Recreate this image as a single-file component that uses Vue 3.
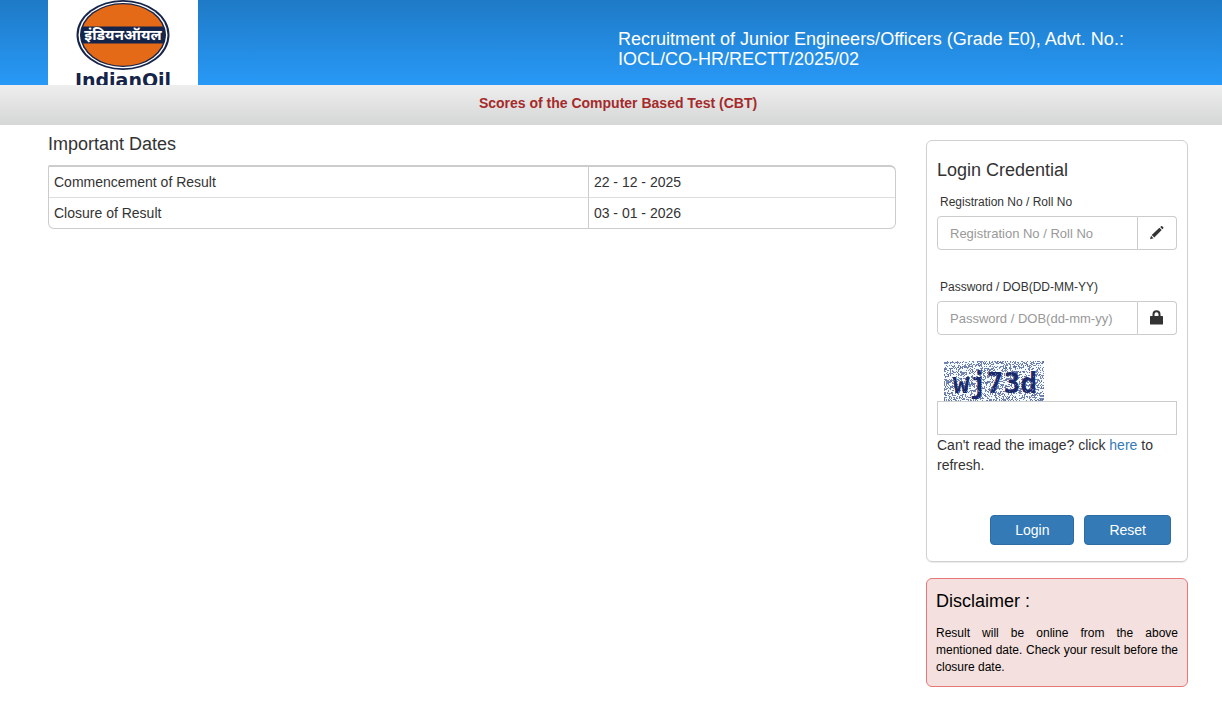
<script setup>
import { ref, computed } from 'vue'

const advtTitle = ref('Recruitment of Junior Engineers/Officers (Grade E0), Advt. No.: IOCL/CO-HR/RECTT/2025/02')

const importantDates = ref([
  { id: 1, label: 'Commencement of Result', date: '22 - 12 - 2025' },
  { id: 2, label: 'Closure of Result', date: '03 - 01 - 2026' },
])

const regNo = ref('')
const password = ref('')
const captchaInput = ref('')
const captchaText = ref('wj73d')
const captchaSeed = ref(7)

// speckles around the captcha text, one subpath per pixel
function speckles(seed, density) {
  let s = seed
  let d = ''
  for (let y = 0; y < 40; y++) {
    for (let x = 0; x < 100; x++) {
      s = (s * 16807) % 2147483647
      const wave = Math.sin((y * 3 + x * 0.4) / 3) * 0.08
      if (s / 2147483647 < density + wave) d += `M${x} ${y}h1v1h-1z`
    }
  }
  return d
}

const backNoise = computed(() => speckles(captchaSeed.value * 7919, 0.38))
const overNoise = computed(() => speckles(captchaSeed.value * 104729, 0.06))

function randomCaptcha() {
  const chars = 'abcdefghjkmnpqrstuvwxyz23456789'
  let out = ''
  for (let i = 0; i < 5; i++) out += chars[Math.floor(Math.random() * chars.length)]
  return out
}

function refreshCaptcha() {
  captchaSeed.value++
  captchaText.value = randomCaptcha()
  captchaInput.value = ''
}

function resetForm() {
  regNo.value = ''
  password.value = ''
  captchaInput.value = ''
}

function login() {
  if (!regNo.value || !password.value) return
  if (captchaInput.value !== captchaText.value) refreshCaptcha()
}
</script>

<template>
  <div class="page">
    <header class="page-header">
      <svg class="logo" width="150" height="85" viewBox="0 0 150 85" role="img">
        <rect width="150" height="85" fill="#fff" />
        <ellipse cx="75" cy="35" rx="46.5" ry="35" fill="#16244a" />
        <ellipse cx="75" cy="35" rx="44.5" ry="33.3" fill="#fff" />
        <ellipse cx="75" cy="35" rx="43" ry="32" fill="#16244a" />
        <ellipse cx="75" cy="35" rx="41.5" ry="30.8" fill="#e56a17" />
        <path d="M34 26.5h82q2.800 8.500 0 17h-82q-2.800-8.500 0-17z" fill="#16244a" />
        <text class="logo-hindi" x="75" y="40" text-anchor="middle">इंडियनऑयल</text>
        <text class="logo-name" x="75" y="87" text-anchor="middle">IndianOil</text>
      </svg>
      <h1 class="advt-title">{{ advtTitle }}</h1>
    </header>

    <div class="sub-header">
      <h2>Scores of the Computer Based Test (CBT)</h2>
    </div>

    <main class="content">
      <section class="dates">
        <h3 class="section-title">Important Dates</h3>
        <table class="dates-table">
          <colgroup>
            <col class="col-label" />
            <col />
          </colgroup>
          <tbody>
            <tr v-for="row in importantDates" :key="row.id">
              <td>{{ row.label }}</td>
              <td>{{ row.date }}</td>
            </tr>
          </tbody>
        </table>
      </section>

      <aside class="sidebar">
        <form class="card login-card" @submit.prevent="login" @reset.prevent="resetForm">
          <h3 class="section-title">Login Credential</h3>

          <label class="field-label" for="reg-no">Registration No / Roll No</label>
          <div class="input-group">
            <input id="reg-no" v-model="regNo" type="text" placeholder="Registration No / Roll No" />
            <span class="addon">
              <svg width="16" height="16" viewBox="0 0 16 16" fill="#333">
                <path d="M1 14.200l1-3.400 2.500 2.500z" />
                <path d="M2.700 10l7.700-7.200 2.300 2.300-7.400 7.500z" />
                <path d="M11.200 2.100l1-.9q.5-.4 1 0l1.100 1.100q.4.500 0 1l-.9 1z" />
              </svg>
            </span>
          </div>

          <label class="field-label" for="password">Password / DOB(DD-MM-YY)</label>
          <div class="input-group">
            <input id="password" v-model="password" type="password" placeholder="Password / DOB(dd-mm-yy)" />
            <span class="addon">
              <svg width="16" height="16" viewBox="0 0 16 16">
                <path d="M4.500 8V4.200q0-2.900 3-2.900t3 2.900V8" fill="none" stroke="#333" stroke-width="2" />
                <rect x="1" y="6" width="13" height="8.500" rx=".6" fill="#333" />
              </svg>
            </span>
          </div>

          <svg class="captcha" width="100" height="40" viewBox="0 0 100 40" role="img">
            <rect width="100" height="40" fill="#f4fbff" />
            <path :d="backNoise" fill="#7584ae" />
            <text x="51" y="32" text-anchor="middle">{{ captchaText }}</text>
            <path :d="overNoise" fill="#5a69a3" />
          </svg>
          <input v-model="captchaInput" class="captcha-input" type="text" aria-label="Captcha" />
          <p class="captcha-help">Can't read the image? click <a href="#" @click.prevent="refreshCaptcha">here</a> to refresh.</p>

          <div class="actions">
            <button type="submit" class="btn">Login</button>
            <button type="reset" class="btn">Reset</button>
          </div>
        </form>

        <section class="card disclaimer">
          <h3 class="section-title">Disclaimer :</h3>
          <p>Result will be online from the above mentioned date. Check your result before the closure date.</p>
        </section>
      </aside>
    </main>
  </div>
</template>

<style>
body { margin: 0; background: #fff; }
</style>

<style scoped>
* { box-sizing: border-box; margin: 0; padding: 0; }

.page {
  font-family: 'Liberation Sans', Arial, sans-serif;
  font-size: 14px;
  line-height: 20px;
  color: #333;
}

/* HEADER */
.page-header {
  display: grid;
  grid-template-columns: 1fr 1fr;
  align-items: start;
  padding: 0 34px 0 48px;
  background: linear-gradient(#1e7ac6, #2899f7);
}
.logo { display: block; }
.logo-hindi { font: bold 15px 'Noto Sans', 'Noto Sans Devanagari', sans-serif; fill: #fff; }
.logo-name { font: bold 19px 'DejaVu Sans', sans-serif; fill: #16244a; }
.advt-title {
  padding: 29px 15px 0 0;
  font-size: 18px;
  font-weight: 400;
  color: #fff;
}

.sub-header {
  height: 40px;
  padding: 8px 34px 0 48px;
  background: linear-gradient(#eee, #d5d6d6);
  text-align: center;
}
.sub-header h2 { font-size: 14px; line-height: 20px; color: #a52a2a; }

/* MAIN CONTENT */
.content {
  display: grid;
  grid-template-columns: minmax(0, 1fr) 262px;
  gap: 30px;
  padding: 9px 34px 16px 48px;
}
.section-title { font-size: 18px; font-weight: 400; line-height: 20px; }

.dates-table {
  width: 100%;
  margin-top: 11px;
  border: 1px solid #ccc;
  border-top-width: 2px;
  border-radius: 2px 6px 6px 6px;
  border-collapse: separate;
  border-spacing: 0;
  table-layout: fixed;
}
.col-label { width: 63.7%; }
.dates-table td { padding: 5px; line-height: 20px; }
.dates-table td + td { border-left: 1px solid #ccc; }
.dates-table tr + tr td { border-top: 1px solid #ddd; }

/* SIDEBAR */
.sidebar {
  display: flex;
  flex-direction: column;
  gap: 16px;
  padding-top: 6px;
}
.card {
  border: 1px solid #d0d0d0;
  border-radius: 6px;
}
.login-card {
  padding: 19px 10px 16px;
  box-shadow: 0 1px 1px rgba(0, 0, 0, 0.08);
}
.field-label {
  display: block;
  margin: 13px 3px 5px;
  font-size: 12px;
  line-height: 18px;
}
.input-group { display: flex; height: 34px; }
.input-group + .field-label { margin-top: 28px; }
.input-group input {
  flex: 1;
  min-width: 0;
  padding: 0 12px;
  border: 1px solid #ccc;
  border-radius: 4px 0 0 4px;
  font: 13px 'Liberation Sans', Arial, sans-serif;
  color: #555;
  outline: none;
}
.input-group input::placeholder { color: #999; }
.addon {
  display: flex;
  align-items: center;
  justify-content: center;
  width: 39px;
  border: 1px solid #ccc;
  border-left: 0;
  border-radius: 0 4px 4px 0;
}
.captcha { display: block; margin: 26px 7px 0; }
.captcha text { font: bold 28px 'DejaVu Sans Mono', monospace; fill: #1b2a68; }
.captcha path { shape-rendering: crispEdges; }
.captcha-input {
  display: block;
  width: 100%;
  height: 34px;
  padding: 0 12px;
  border: 1px solid #ccc;
  font: 14px 'Liberation Sans', Arial, sans-serif;
  color: #555;
  outline: none;
}
.captcha-help a { color: #337ab7; text-decoration: none; }

.actions {
  display: flex;
  justify-content: flex-end;
  gap: 10px;
  margin-top: 40px;
  padding-right: 6px;
}
.btn {
  height: 30px;
  padding: 0 24px;
  border: 1px solid #2e6da4;
  border-radius: 4px;
  background: #337ab7;
  font: 14px 'Liberation Sans', Arial, sans-serif;
  color: #fff;
  cursor: pointer;
}
.btn:hover { background: #286090; }

.disclaimer {
  padding: 12px 9px 10px;
  background: #f4e0de;
  border-color: #e77777;
  color: #000;
}
.disclaimer p {
  margin-top: 14px;
  font-size: 12px;
  line-height: 17px;
  text-align: justify;
}

@media (max-width: 800px) {
  .page-header, .sub-header, .content { padding-left: 16px; padding-right: 16px; }
  .content { grid-template-columns: minmax(0, 1fr); }
}
</style>
